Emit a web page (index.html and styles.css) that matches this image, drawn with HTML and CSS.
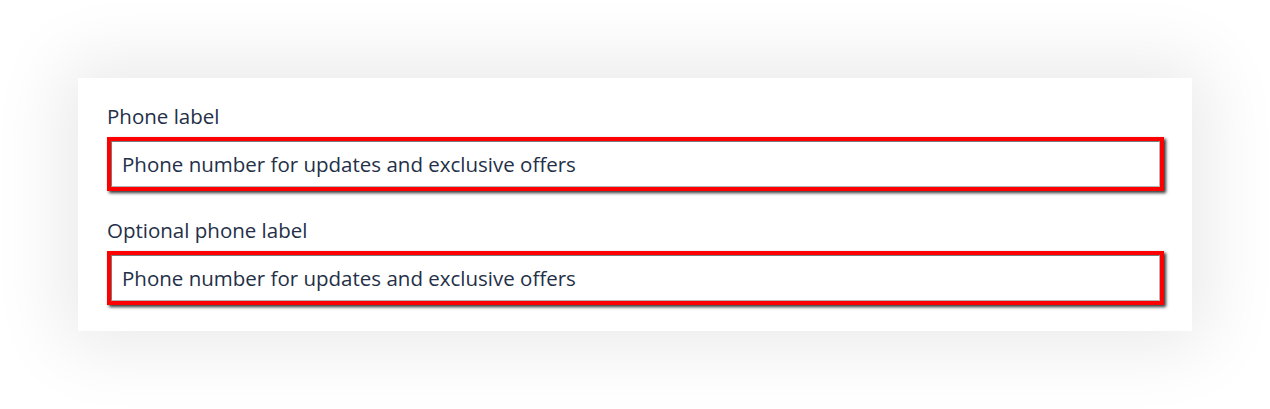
FILE: index.html
```html
<!DOCTYPE html>
<html lang="en">
<head>
  <meta charset="UTF-8">
  <meta name="viewport" content="width=device-width, initial-scale=1.0">
  <title>Phone labels</title>
  <link rel="stylesheet" href="styles.css">
</head>
<body>

  <div class="form-card">
    <div class="field">
      <label class="field-label" for="phone">Phone label</label>
      <div class="field-frame">
        <input type="text" id="phone" value="Phone number for updates and exclusive offers">
      </div>
    </div>
    <div class="field">
      <label class="field-label" for="phoneOptional">Optional phone label</label>
      <div class="field-frame">
        <input type="text" id="phoneOptional" value="Phone number for updates and exclusive offers">
      </div>
    </div>
  </div>

</body>
</html>
```

FILE: styles.css
```css
* { margin: 0; padding: 0; box-sizing: border-box; }
body { font-family: 'Open Sans', 'Noto Sans', sans-serif; background: #fff; padding: 78px 78px 0 78px; height: 409px; overflow: hidden; }
.form-card { width: 1114px; height: 253px; background: #fff; box-shadow: 0 0 70px 14px rgba(0, 0, 0, 0.09); padding: 23px 28px 24px 29px; display: flex; flex-direction: column; gap: 24px; }
.field { display: flex; flex-direction: column; }
.field-label { font-size: 20.5px; line-height: 30px; color: #243047; margin-bottom: 6px; }
.field-frame { border: 4px solid #ff0000; box-shadow: 2px 2px 3px rgba(0, 0, 0, 0.8); height: 54px; }
.field-frame input { width: 100%; height: 100%; border: 1px solid #b5b5b5; border-top-color: #7a7a7a; border-left-color: #7a7a7a; padding: 0 10px; font-family: inherit; font-size: 20.5px; color: #243047; outline: none; background: #fff; }
```
